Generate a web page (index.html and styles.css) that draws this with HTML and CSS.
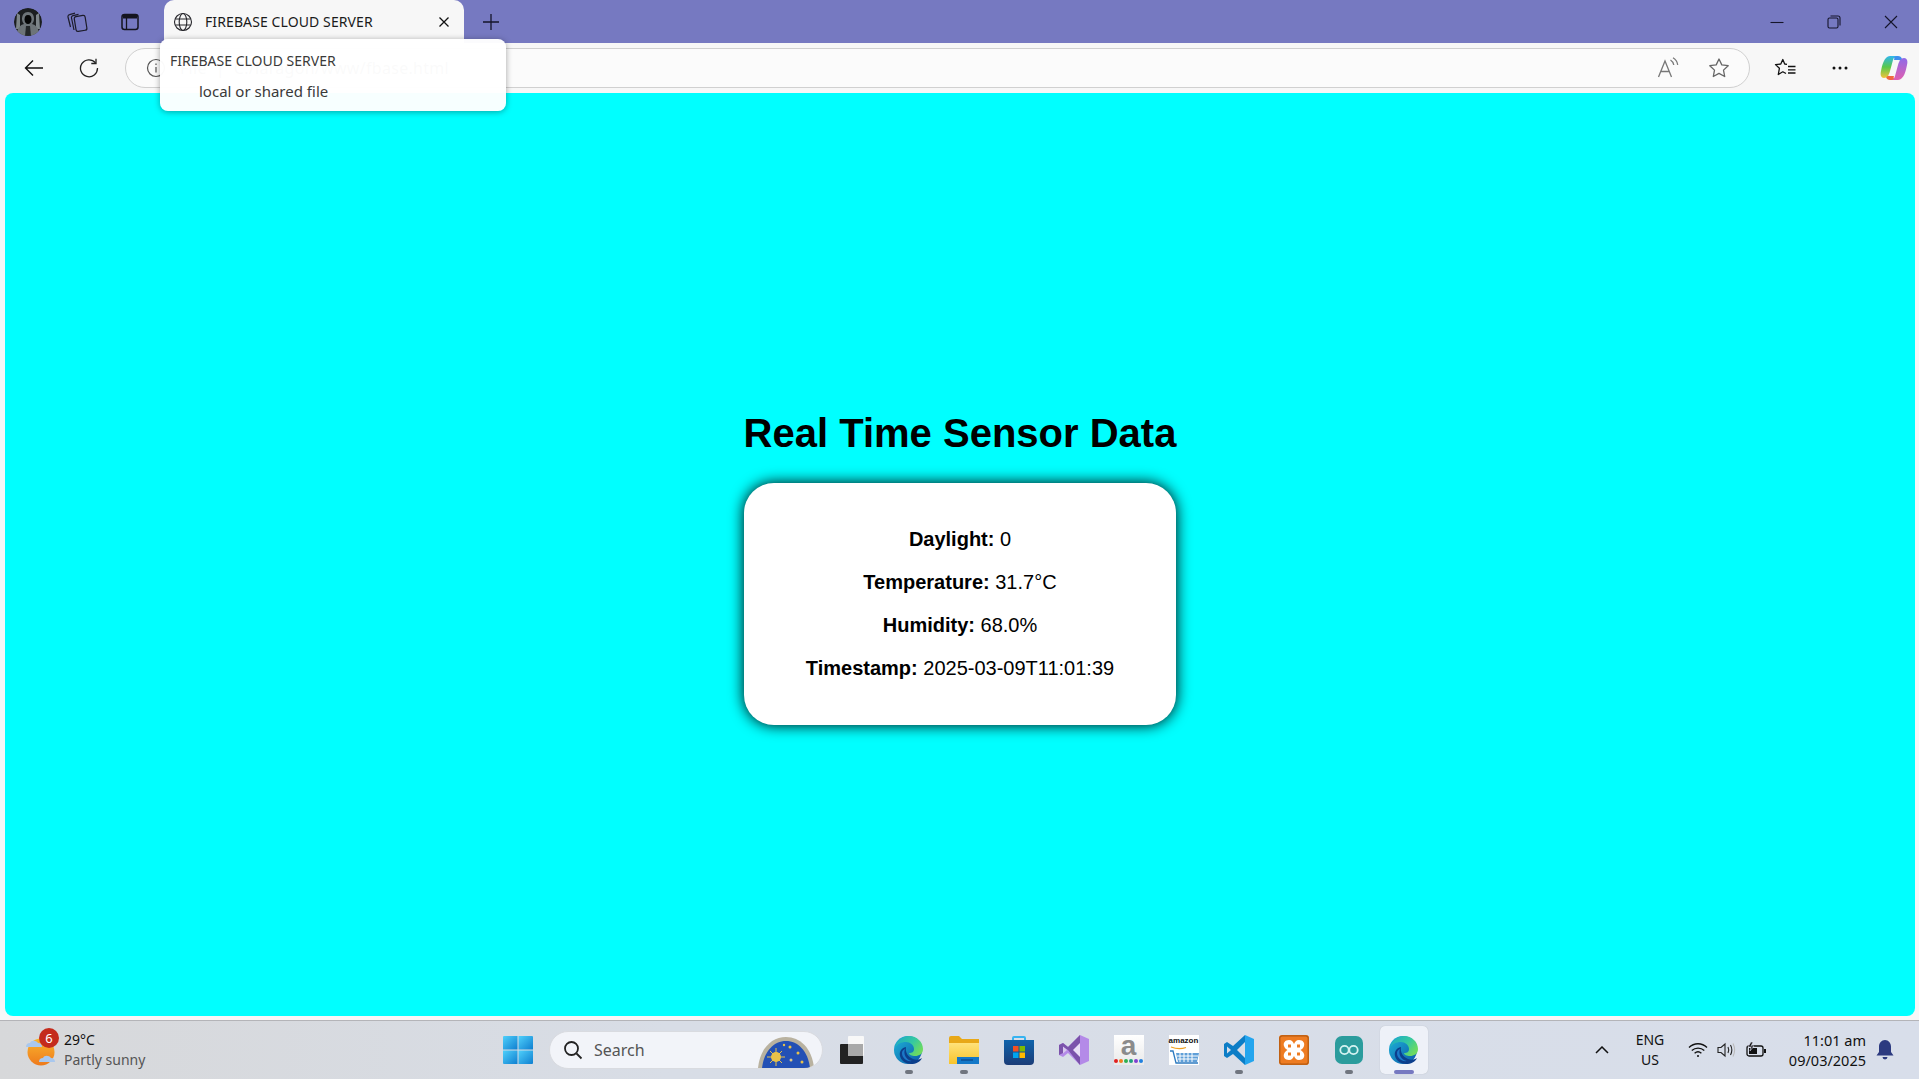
FILE: index.html
```html
<!DOCTYPE html>
<html lang="en">
<head>
    <meta charset="UTF-8">
    <meta name="viewport" content="width=device-width, initial-scale=1.0">
    <title>FIREBASE CLOUD SERVER</title>
    <link rel="stylesheet" href="styles.css">
</head>
<body>
    <svg class="defs" width="0" height="0">
        <defs>
            <linearGradient id="edgeBody" x1="0" y1="0" x2="1" y2="1">
                <stop offset="0" stop-color="#1fb6d8"/>
                <stop offset="1" stop-color="#0b57a8"/>
            </linearGradient>
            <linearGradient id="edgeTop" x1="0" y1="0" x2="1" y2="0.6">
                <stop offset="0" stop-color="#1aa7c9"/>
                <stop offset="0.6" stop-color="#35c9a0"/>
                <stop offset="1" stop-color="#6edb5f"/>
            </linearGradient>
            <linearGradient id="winTile" x1="0" y1="0" x2="1" y2="1">
                <stop offset="0" stop-color="#4fd0fb"/>
                <stop offset="1" stop-color="#0f7fd0"/>
            </linearGradient>
            <linearGradient id="copilotLeft" x1="0" y1="0" x2="0" y2="1">
                <stop offset="0" stop-color="#2fb6f0"/>
                <stop offset="0.5" stop-color="#58c84a"/>
                <stop offset="1" stop-color="#f3c33c"/>
            </linearGradient>
            <linearGradient id="copilotRight" x1="0" y1="0" x2="0" y2="1">
                <stop offset="0" stop-color="#8f6ae8"/>
                <stop offset="1" stop-color="#e05fb0"/>
            </linearGradient>
            <linearGradient id="sun" x1="0" y1="0" x2="0" y2="1">
                <stop offset="0" stop-color="#f9b52e"/>
                <stop offset="1" stop-color="#ee7a1c"/>
            </linearGradient>
            <linearGradient id="storeBag" x1="0" y1="0" x2="0" y2="1">
                <stop offset="0" stop-color="#0f63ab"/>
                <stop offset="1" stop-color="#1c3d78"/>
            </linearGradient>
            <linearGradient id="folder" x1="0" y1="0" x2="0" y2="1">
                <stop offset="0" stop-color="#ffe27a"/>
                <stop offset="1" stop-color="#f8c42c"/>
            </linearGradient>
            <symbol id="edge" viewBox="0 0 32 32">
                <circle cx="15" cy="16" r="14" fill="url(#edgeBody)"/>
                <path d="M2 14C4 6 10 2 16 2c8 0 14 6 14 13 0 5-4 7-8 7-3 0-6-1-6-3 3 0 5-1 5-4 0-4-4-7-8-7-5 0-9 2-11 6z" fill="url(#edgeTop)"/>
                <path d="M13 13c-5 1-7 5-6 9 1 4 5 8 11 8 5 0 9-2 11-6-3 2-6 2-9 1-5-2-8-7-7-12z" fill="#0c3f8c"/>
                <path d="M12 15c-2 5 1 11 7 12-5 1-10-3-10-8 0-2 1-3 3-4z" fill="#1b78c8"/>
            </symbol>
        </defs>
    </svg>

    <header class="tabstrip">
        <div class="tabstrip-left">
            <span class="avatar">
                <svg width="28" height="28" viewBox="0 0 28 28"><circle cx="14" cy="14" r="14" fill="#1b1e20"/><path d="M3 5l3 2v14H2zM25 5l-3 2v14h4z" fill="#7d8589"/><path d="M14 4c-4 0-6 3-6 7 0 2 1 4 2 5-4 1-6 4-7 8 3 3 7 4 11 4s8-1 11-4c-1-4-3-7-7-8 1-1 2-3 2-5 0-4-2-7-6-7z" fill="#6d7478"/><path d="M14 7c-2.500 0-3.500 2-3.500 4.500S12 16 14 16s3.500-2 3.500-4.500S16.500 7 14 7z" fill="#050606"/><path d="M12 18h4l1 10h-6z" fill="#24282a"/></svg>
            </span>
            <span class="strip-btn collections">
                <svg width="24" height="24" viewBox="0 0 24 24" fill="none" stroke="#1c1c2a" stroke-width="1.2" stroke-linejoin="round"><rect x="10" y="6" width="11" height="15" rx="2" transform="rotate(-9 15 13)"/><path d="M9 20L6.500 8a2 2 0 0 1 1.500-2.400L13.500 4.300"/><path d="M5.500 17L3 7a2 2 0 0 1 1.500-2.400L10 3.200"/></svg>
            </span>
            <span class="strip-btn tabs-view">
                <svg width="20" height="20" viewBox="0 0 20 20"><rect x="2" y="2.500" width="16" height="15" rx="2.500" fill="none" stroke="#14141f" stroke-width="1.500"/><path d="M3 3h14v3.500H3z" fill="#14141f"/><path d="M6.500 6v11" stroke="#14141f" stroke-width="1.300"/></svg>
            </span>
        </div>
        <div class="tab">
            <svg width="20" height="20" viewBox="0 0 20 20" fill="none" stroke="#26262b" stroke-width="1.100"><circle cx="10" cy="10" r="8.500"/><ellipse cx="10" cy="10" rx="3.800" ry="8.500"/><path d="M2.300 7h15.400M2.300 13h15.400"/></svg>
            <span class="tab-title">FIREBASE CLOUD SERVER</span>
            <svg width="10" height="10" viewBox="0 0 10 10" stroke="#111" stroke-width="1.300"><path d="M.5.500l9 9M9.500.500l-9 9"/></svg>
        </div>
        <svg class="new-tab" width="18" height="18" viewBox="0 0 18 18" stroke="#15152a" stroke-width="1.300"><path d="M9 1v16M1 9h16"/></svg>
        <div class="window-controls">
            <svg width="14" height="14" viewBox="0 0 14 14" stroke="#15152a" stroke-width="1.100"><path d="M.5 7.500h13"/></svg>
            <svg width="14" height="14" viewBox="0 0 14 14" fill="none" stroke="#15152a" stroke-width="1.100"><rect x="1" y="3" width="10" height="10" rx="1.500"/><path d="M3.500 1h7.500a2 2 0 0 1 2 2v7.500"/></svg>
            <svg width="14" height="14" viewBox="0 0 14 14" stroke="#15152a" stroke-width="1.100"><path d="M1 1l12 12M13 1L1 13"/></svg>
        </div>
    </header>

    <div class="toolbar">
        <svg width="20" height="18" viewBox="0 0 20 18" fill="none" stroke="#111" stroke-width="1.400"><path d="M19 9H1.500M9 1.500L1.500 9 9 16.500"/></svg>
        <svg class="nav-reload" width="20" height="20" viewBox="0 0 20 20" fill="none" stroke="#222" stroke-width="1.300"><path d="M16.500 4.800A8.500 8.500 0 1 0 18.500 10"/><path d="M17 .8v4.700h-4.700"/></svg>
        <div class="address">
            <svg width="20" height="20" viewBox="0 0 20 20" fill="none" stroke="#555" stroke-width="1.200"><circle cx="10" cy="10" r="8.500"/><path d="M10 9v5.500M10 5.500v1.500"/></svg>
            <span class="addr-text">File &nbsp;|&nbsp; C:/laragon/www/fbase.html</span>
            <svg class="addr-read" width="24" height="22" viewBox="0 0 24 22" fill="none" stroke="#777" stroke-width="1.300"><path d="M1.500 20L8 4l6.500 16M4 14.500h8"/><path d="M13.500 3c2 1.200 3 3 3.300 5M16 .8c2.800 1.700 4.300 4 4.700 7"/></svg>
            <svg class="addr-star" width="22" height="22" viewBox="0 0 22 22" fill="none" stroke="#666" stroke-width="1.300" stroke-linejoin="round"><path d="M11 2l2.800 5.900 6.400.8-4.700 4.400 1.200 6.400L11 16.400 5.300 19.500l1.200-6.400L1.800 8.700l6.400-.8z"/></svg>
        </div>
        <div class="toolbar-right">
            <svg width="22" height="22" viewBox="0 0 22 22" fill="none" stroke="#111" stroke-width="1.300" stroke-linejoin="round"><path d="M13 7.300l-2.300-.3L8.800 2.500 6.800 7l-5.300.6 3.900 3.700-1.100 6.200 4.500-2.700 3.200 1.700"/><path d="M14 9.500h7.500M14 12.800h7.500M14 16h7.500"/></svg>
            <svg class="more-dots" width="16" height="4" viewBox="0 0 16 4" fill="#111"><circle cx="2" cy="2" r="1.500"/><circle cx="8" cy="2" r="1.500"/><circle cx="14" cy="2" r="1.500"/></svg>
            <svg width="28" height="28" viewBox="0 0 28 28"><path d="M10 2h8c2 0 3.500 1 4 3l1 4c-1-2-2.500-3-4.500-3H14c1-2 0-4-4-4z" fill="#3f8fee"/><path d="M18 26h-8c-2 0-3.500-1-4-3l-1-4c1 2 2.500 3 4.500 3H14c-1 2 0 4 4 4z" fill="#f0683f"/><path d="M10 2h7c-2 0-3 1-4 4l-3 11c-1 4-3 7-6 7-3 0-4-3-3-7 1-5 3-15 9-15z" fill="url(#copilotLeft)"/><path d="M18 26h-7c2 0 3-1 4-4l3-11c1-4 3-7 6-7 3 0 4 3 3 7-1 5-3 15-9 15z" fill="url(#copilotRight)"/></svg>
        </div>
    </div>

    <div class="tooltip">
        <div class="tooltip-title">FIREBASE CLOUD SERVER</div>
        <div class="tooltip-sub">local or shared file</div>
    </div>

    <main class="viewport">
        <h1>Real Time Sensor Data</h1>
        <div class="card">
            <p><strong>Daylight:</strong> 0</p>
            <p><strong>Temperature:</strong> 31.7°C</p>
            <p><strong>Humidity:</strong> 68.0%</p>
            <p><strong>Timestamp:</strong> 2025-03-09T11:01:39</p>
        </div>
    </main>

    <footer class="taskbar">
        <div class="weather">
            <span class="weather-icon">
                <svg width="34" height="36" viewBox="0 0 34 36"><circle cx="17" cy="20" r="13.500" fill="url(#sun)"/><path d="M2 15a4 4 0 0 1 4-4c1-3 6-3 8 0 3 0 4 2 4 4z" fill="#a9c8ee"/><path d="M15 30a4 4 0 0 1 4-4c1-3 6-3 8 0 3 0 4 2 4 4z" fill="#a9c8ee"/></svg>
                <span class="weather-badge">6</span>
            </span>
            <div class="weather-text">
                <div class="weather-temp">29°C</div>
                <div class="weather-desc">Partly sunny</div>
            </div>
        </div>

        <div class="apps">
            <span class="start">
                <svg width="30" height="30" viewBox="0 0 30 30" fill="url(#winTile)"><path d="M1 1h13.500v13.500H0V2a1 1 0 0 1 1-1z"/><path d="M15.500 1H29a1 1 0 0 1 1 1v12.500H15.500z"/><path d="M0 15.500h14.500V29H1a1 1 0 0 1-1-1z"/><path d="M15.500 15.500H30V28a1 1 0 0 1-1 1H15.500z"/></svg>
            </span>
            <div class="search">
                <svg width="20" height="20" viewBox="0 0 20 20" fill="none" stroke="#222" stroke-width="1.800"><circle cx="8.500" cy="8.500" r="6.500"/><path d="M13.500 13.500l5 5"/></svg>
                <span class="search-label">Search</span>
                <svg class="doodle" width="56" height="32" viewBox="0 0 56 32"><path d="M0 32C2 12 14 1 28 1s26 11 28 31z" fill="#b9b2a0"/><path d="M4 32C6 15 16 5 28 5s22 10 24 27z" fill="#2350b5"/><circle cx="18" cy="21" r="5" fill="#e8c14a"/><path d="M18 12v18M9 21h18M12 15l12 12M24 15L12 27" stroke="#e8c14a" stroke-width="1"/><circle cx="32" cy="11" r="1.500" fill="#e8c14a"/><circle cx="40" cy="17" r="1.500" fill="#e8c14a"/><circle cx="33" cy="24" r="1.500" fill="#d9c68a"/><circle cx="44" cy="26" r="1.500" fill="#e8c14a"/><circle cx="26" cy="9" r="1.200" fill="#e8c14a"/></svg>
            </div>

            <span class="app task-view">
                <svg width="24" height="30" viewBox="0 0 24 28"><rect x="8" y="0" width="16" height="20" rx="1" fill="#f8f8f8"/><rect x="0" y="8" width="23" height="20" rx="1" fill="#222"/><rect x="8" y="8" width="15" height="12" fill="#a9a9a9"/></svg>
            </span>
            <span class="app app-running">
                <svg width="32" height="32"><use href="#edge"/></svg>
            </span>
            <span class="app app-running">
                <svg width="30" height="28" viewBox="0 0 30 28"><path d="M0 2a2 2 0 0 1 2-2h8l3 3h17v25H0z" fill="#e8a818"/><path d="M0 7h30v21H0z" fill="url(#folder)"/><path d="M8 21h22v7H8z" fill="#1478c8"/><path d="M12 24h12" stroke="#0c4f94" stroke-width="1.500"/></svg>
            </span>
            <span class="app">
                <svg width="30" height="30" viewBox="0 0 30 30"><path d="M9 6V3a1 1 0 0 1 1-1h10a1 1 0 0 1 1 1v3" fill="none" stroke="#37b3f0" stroke-width="2"/><path d="M0 5h30v21a4 4 0 0 1-4 4H4a4 4 0 0 1-4-4z" fill="url(#storeBag)"/><path d="M9 11h5.500v5.500H9z" fill="#f25022"/><path d="M15.500 11H21v5.500h-5.500z" fill="#7fba00"/><path d="M9 17.500h5.500V23H9z" fill="#00a4ef"/><path d="M15.500 17.500H21V23h-5.500z" fill="#ffb900"/></svg>
            </span>
            <span class="app">
                <svg width="30" height="30" viewBox="0 0 30 30"><path d="M21 0l9 4v22l-9 4-12-12-5 4-4-2V10l4-2 5 4z" fill="#b48ae8"/><path d="M21 0L9 12 4 8 0 10v10l4-2V12l5 3 12 15z" fill="#7b52ab"/><path d="M21 8v14l-7-7z" fill="#e8ddf6"/><path d="M4 11.500L8 15l-4 3.500z" fill="#d8c8ee"/></svg>
            </span>
            <span class="app">
                <span class="a-tile">
                    <span class="a-letter">a</span>
                    <span class="a-dots"><i class="d1"></i><i class="d2"></i><i class="d3"></i><i class="d4"></i><i class="d5"></i><i class="d6"></i></span>
                </span>
            </span>
            <span class="app">
                <span class="cart-tile">
                    <span class="cart-word">amazon</span>
                    <svg width="30" height="19" viewBox="0 0 30 19"><path d="M2 1q8 3 15 .5" fill="none" stroke="#f0a020" stroke-width="1.200"/><path d="M1 5h3l3 12h22" fill="none" stroke="#2c7ac0" stroke-width="1.300"/><path d="M7 7h23l-2 9H9z" fill="#5f9fd8"/><path d="M11 7v9M15 7v9M19 7v9M23 7v9M8 10h21M9 13h19" stroke="#fff" stroke-width="1"/></svg>
                </span>
            </span>
            <span class="app app-running">
                <svg width="30" height="30" viewBox="0 0 30 30"><path d="M21 0l9 4v22l-9 4z" fill="#24a5ee"/><path d="M21 0L9 11 3 7l-3 2v12l3 2 6-4 12 11v-7l-8-8 8-8z" fill="#0c7dc6"/><path d="M3 11.500L7 15l-4 3.500z" fill="#d8dee9"/></svg>
            </span>
            <span class="app">
                <svg width="30" height="30" viewBox="0 0 30 30"><rect width="30" height="30" rx="3" fill="#ee7c22"/><rect x=".8" y=".8" width="28.400" height="28.400" rx="2.500" fill="none" stroke="#b55a10" stroke-width="1.200"/><path d="M10 5c-4 0-6 3-5 6 .5 2 2 3 3.500 4C7 16 5.500 17 5 19c-1 3 1 6 5 6 3 0 4-2 5-4 1 2 2 4 5 4 4 0 6-3 5-6-.5-2-2-3-3.500-4 1.500-1 3-2 3.500-4 1-3-1-6-5-6-3 0-4 2-5 4-1-2-2-4-5-4z" fill="#fff"/><path d="M9 9.500h3v3H9zM18 9.500h3v3h-3zM9 17.500h3v3H9zM18 17.500h3v3h-3z" fill="#ee7c22"/></svg>
            </span>
            <span class="app app-running">
                <svg width="28" height="28" viewBox="0 0 28 28"><rect width="28" height="28" rx="7" fill="#2b9c9d"/><g fill="none" stroke="#d5f3f2" stroke-width="1.800"><circle cx="9.500" cy="14" r="4.200"/><circle cx="18.500" cy="14" r="4.200"/></g></svg>
            </span>
            <span class="app app-active">
                <svg width="32" height="32"><use href="#edge"/></svg>
            </span>
        </div>

        <div class="tray">
            <svg width="14" height="8" viewBox="0 0 14 8" fill="none" stroke="#111" stroke-width="1.500"><path d="M1 7l6-6 6 6"/></svg>
            <div class="lang">ENG<br>US</div>
            <svg class="tray-wifi" width="20" height="16" viewBox="0 0 20 16" fill="none" stroke="#111" stroke-width="1.300"><path d="M1 5.500c5-5 13-5 18 0M3.800 8.500c3.500-3.300 9-3.300 12.500 0M6.600 11.300c2-1.800 4.800-1.800 6.800 0"/><circle cx="10" cy="14" r="1" fill="#111" stroke="none"/></svg>
            <svg class="tray-sound" width="20" height="16" viewBox="0 0 20 16" fill="none" stroke="#222" stroke-width="1.100"><path d="M1 5.500h3L8 2v12l-4-3.500H1z"/><path d="M11 5c1 2 1 4 0 6M13.500 3c1.600 3 1.600 7 0 10"/><path d="M16 1.500c2 4 2 9 0 13" stroke="#bbb"/></svg>
            <svg class="tray-battery" width="21" height="16" viewBox="0 0 21 16"><rect x="1" y="4" width="16" height="10" rx="2" fill="none" stroke="#111" stroke-width="1.300"/><path d="M3 6h8v6H3z" fill="#111"/><path d="M18 7h2v4h-2z" fill="#111"/><path d="M5 0L2 5h3l-1 4 4-5H5l2-4z" fill="#111" stroke="#dde" stroke-width=".6"/></svg>
            <div class="clock">
                <div>11:01 am</div>
                <div>09/03/2025</div>
            </div>
            <svg width="18" height="20" viewBox="0 0 18 20" fill="#2c3a80"><path d="M9 0c-3.500 0-6 3-6 6.500V12l-2.500 3.500h17L15 12V6.500C15 3 12.500 0 9 0z"/><path d="M6.500 17h5a2.500 2.500 0 0 1-5 0z"/></svg>
        </div>
    </footer>
</body>
</html>
```

FILE: styles.css
```css
* {
    box-sizing: border-box;
}

html, body {
    height: 100%;
    margin: 0;
}

body {
    display: flex;
    flex-direction: column;
    position: relative;
    overflow: hidden;
    background: #f7f7f7;
    font-family: "Noto Sans", "Open Sans", sans-serif;
    color: #111;
}

svg {
    display: block;
    flex: none;
}

.defs {
    position: absolute;
}

/* browser title strip */
.tabstrip {
    display: flex;
    align-items: center;
    height: 43px;
    flex: none;
    background: #7679c1;
}

.tabstrip-left {
    display: flex;
    align-items: center;
    width: 164px;
    padding-left: 14px;
}

.avatar {
    width: 28px;
    height: 28px;
    border-radius: 50%;
    overflow: hidden;
}

.strip-btn {
    display: flex;
    justify-content: center;
    width: 34px;
}

.collections {
    margin-left: 18px;
}

.tabs-view {
    margin-left: 19px;
}

.tab {
    display: flex;
    align-items: center;
    width: 300px;
    height: 43px;
    padding: 0 15px 0 9px;
    background: #f7f7f7;
    border-radius: 10px 10px 0 0;
}

.tab-title {
    flex: 1;
    margin-left: 12px;
    font-size: 14px;
    letter-spacing: 0.1px;
    color: #1b1b1b;
    white-space: nowrap;
}

.new-tab {
    margin-left: 18px;
}

.window-controls {
    display: flex;
    align-items: center;
    gap: 43px;
    margin-left: auto;
    padding-right: 21px;
}

/* address row */
.toolbar {
    display: flex;
    align-items: center;
    height: 50px;
    flex: none;
    padding-left: 24px;
}

.nav-reload {
    margin-left: 35px;
}

.address {
    display: flex;
    align-items: center;
    width: 1625px;
    height: 40px;
    margin-left: 26px;
    padding: 0 19px 0 20px;
    border: 1px solid #d0d0d0;
    border-radius: 20px;
    background: #fbfbfb;
}

.addr-text {
    margin-left: 14px;
    font-size: 16px;
    letter-spacing: 0.3px;
    color: #666;
    white-space: nowrap;
}

.addr-read {
    margin-left: auto;
}

.addr-star {
    margin-left: 27px;
}

.toolbar-right {
    display: flex;
    align-items: center;
    margin-left: 24px;
    gap: 32px;
}

.more-dots {
    margin-left: 4px;
}

/* tab hover card */
.tooltip {
    position: absolute;
    left: 160px;
    top: 39px;
    width: 346px;
    height: 72px;
    padding: 12px 10px;
    border-radius: 8px;
    background: rgba(255, 255, 255, 0.97);
    box-shadow: 0 1px 6px rgba(0, 0, 0, 0.35);
    font-size: 14px;
    color: #3a3a3a;
}

.tooltip-sub {
    margin-top: 11px;
    padding-left: 29px;
    font-size: 15px;
}

/* page content */
.viewport {
    flex: 1;
    display: flex;
    flex-direction: column;
    align-items: center;
    justify-content: center;
    margin: 0 4px 0 5px;
    background: #00ffff;
    border-radius: 8px;
    font-family: "Liberation Sans", Arial, sans-serif;
    color: #000;
    text-align: center;
}

h1 {
    font-size: 40px;
}

.card {
    width: 432px;
    padding: 25px;
    border-radius: 30px;
    background: #fff;
    box-shadow: 0 0 15px #000;
    font-size: 20px;
}

.card p {
    margin: 20px 0;
}

/* windows taskbar */
.taskbar {
    display: flex;
    align-items: center;
    height: 59px;
    flex: none;
    margin-top: 4px;
    border-top: 1px solid #b4b4b8;
    background: linear-gradient(90deg, #d7d8da 0%, #d8dde6 35%, #d8deea 100%);
}

.weather {
    display: flex;
    align-items: center;
    width: 491px;
    padding-left: 24px;
}

.weather-icon {
    position: relative;
    width: 34px;
    height: 36px;
}

.weather-badge {
    position: absolute;
    left: 15px;
    top: -4px;
    width: 20px;
    height: 20px;
    border-radius: 50%;
    background: #c42b1c;
    color: #fff;
    font-size: 13px;
    line-height: 20px;
    text-align: center;
}

.weather-text {
    margin-left: 6px;
    font-size: 14px;
    line-height: 20px;
}

.weather-desc {
    color: #555;
}

.apps {
    display: flex;
    align-items: center;
}

.start {
    display: flex;
    justify-content: center;
    width: 54px;
}

.search {
    display: flex;
    align-items: center;
    width: 274px;
    height: 38px;
    margin-left: 4px;
    margin-right: 1px;
    padding-left: 13px;
    border: 1px solid #d9dbe0;
    border-radius: 19px;
    background: #f2f4f9;
    overflow: hidden;
}

.search-label {
    margin-left: 11px;
    font-size: 16px;
    color: #555;
}

.doodle {
    margin-left: auto;
    margin-right: 8px;
    align-self: flex-end;
}

.app {
    position: relative;
    display: flex;
    align-items: center;
    justify-content: center;
    width: 55px;
    height: 48px;
    border-radius: 5px;
}

.task-view {
    margin-right: 2px;
}

.app-running::after,
.app-active::after {
    content: "";
    position: absolute;
    bottom: 0;
    left: 50%;
    width: 8px;
    height: 4px;
    margin-left: -4px;
    border-radius: 2px;
    background: #70757f;
}

.app-active {
    width: 48px;
    margin-left: 4px;
    background: #eef1f8;
    box-shadow: 0 0 1px rgba(0, 0, 0, 0.2);
}

.app-active::after {
    width: 20px;
    margin-left: -10px;
    background: #7679c1;
}

.a-tile {
    display: flex;
    flex-direction: column;
    align-items: center;
    width: 30px;
    height: 30px;
    background: linear-gradient(#fff, #e9e9e9);
}

.a-letter {
    font-family: "Liberation Sans", Arial, sans-serif;
    font-size: 28px;
    font-weight: bold;
    line-height: 22px;
    color: #8b8b8b;
}

.a-dots {
    display: flex;
    gap: 1px;
    margin-top: 2px;
}

.a-dots i {
    width: 4px;
    height: 4px;
    border-radius: 50%;
}

.d1 { background: #e02020; }
.d2 { background: #f08020; }
.d3 { background: #30b050; }
.d4 { background: #20a080; }
.d5 { background: #8040d0; }
.d6 { background: #2080e0; }

.cart-tile {
    display: flex;
    flex-direction: column;
    align-items: center;
    width: 30px;
    height: 30px;
    background: #fff;
}

.cart-word {
    font-family: "Liberation Sans", Arial, sans-serif;
    font-size: 8px;
    font-weight: bold;
    line-height: 11px;
    color: #111;
}

.tray {
    display: flex;
    align-items: center;
    margin-left: auto;
    padding-right: 25px;
}

.lang {
    width: 50px;
    margin-left: 16px;
    font-size: 14px;
    line-height: 20px;
    text-align: center;
}

.tray-wifi {
    margin-left: 13px;
}

.tray-sound {
    margin-left: 9px;
}

.tray-battery {
    margin-left: 9px;
}

.clock {
    width: 99px;
    margin-right: 10px;
    font-size: 14.5px;
    line-height: 20px;
    text-align: right;
}
```
